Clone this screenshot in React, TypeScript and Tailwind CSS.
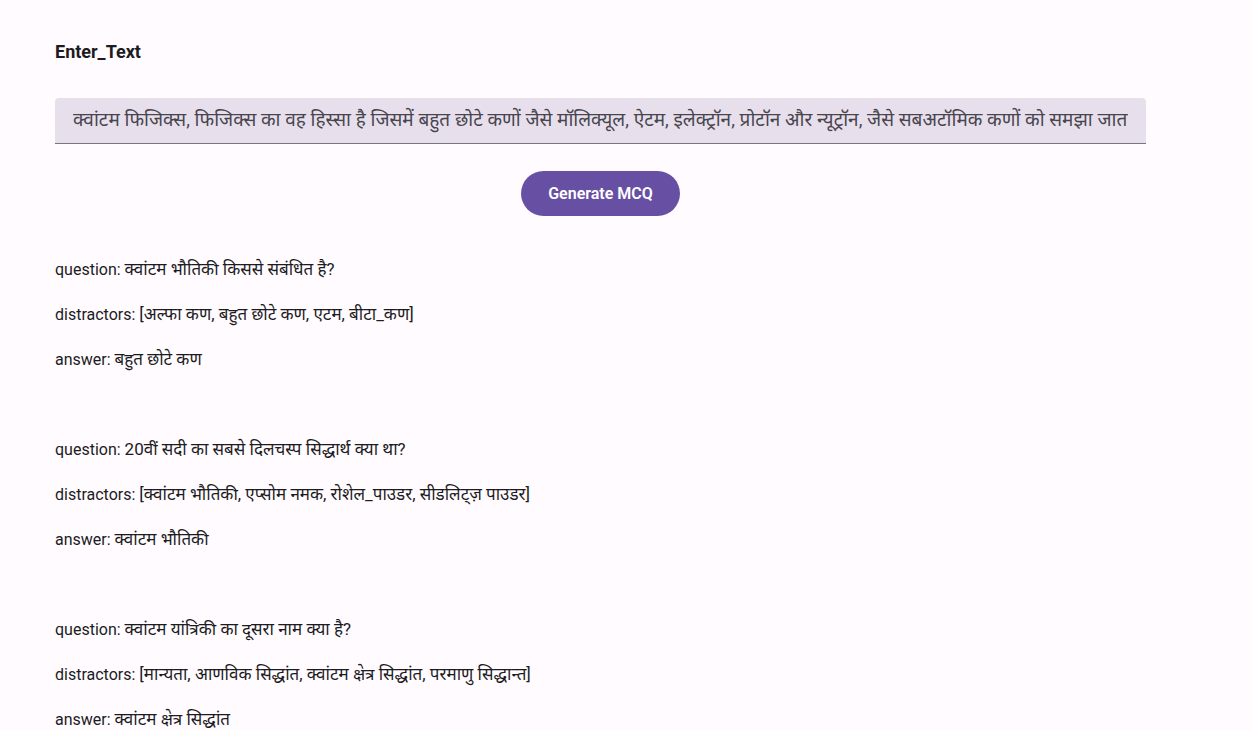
const MCQS = [
  {
    question: "क्वांटम भौतिकी किससे संबंधित है?",
    distractors: "[अल्फा कण, बहुत छोटे कण, एटम, बीटा_कण]",
    answer: "बहुत छोटे कण",
  },
  {
    question: "20वीं सदी का सबसे दिलचस्प सिद्धार्थ क्या था?",
    distractors: "[क्वांटम भौतिकी, एप्सोम नमक, रोशेल_पाउडर, सीडलिट्ज़ पाउडर]",
    answer: "क्वांटम भौतिकी",
  },
  {
    question: "क्वांटम यांत्रिकी का दूसरा नाम क्या है?",
    distractors: "[मान्यता, आणविक सिद्धांत, क्वांटम क्षेत्र सिद्धांत, परमाणु सिद्धान्त]",
    answer: "क्वांटम क्षेत्र सिद्धांत",
  },
];

const INPUT_TEXT =
  "क्वांटम फिजिक्स, फिजिक्स का वह हिस्सा है जिसमें बहुत छोटे कणों जैसे मॉलिक्यूल, ऐटम, इलेक्ट्रॉन, प्रोटॉन और न्यूट्रॉन, जैसे सबअटॉमिक कणों को समझा जाता है।";

function Row({ label, value }: { label: string; value: string }) {
  return (
    <p className="flex h-[45px] items-center whitespace-pre">
      {label}: <span className="text-[17px]">{value}</span>
    </p>
  );
}

export default function App() {
  return (
    <div
      className="h-screen w-full overflow-hidden bg-[#fffbfe] text-[#1c1b1f]"
      style={{ fontFamily: "Roboto, 'Noto Sans', 'Noto Sans Devanagari', sans-serif" }}
    >
      <div className="ml-[55px] w-[1091px] pt-[41px]">
        {/* Heading */}
        <h1 className="text-[18px] font-bold leading-[22px]">Enter_Text</h1>

        {/* Text field */}
        <div className="mt-[35px] flex h-[46px] items-center rounded-t-[4px] border-b border-[#79747e] bg-[#e7e0ec] px-[18px]">
          <div className="overflow-hidden whitespace-nowrap text-[19px] text-[#49454f]">{INPUT_TEXT}</div>
        </div>

        {/* Button */}
        <div className="mt-[27px] flex justify-center">
          <button className="h-[45px] w-[159px] rounded-full bg-[#6750a4] text-[16px] font-semibold text-white">
            Generate MCQ
          </button>
        </div>

        {/* Results */}
        <div className="mt-[31px] flex flex-col text-[16px]">
          {MCQS.map((m, i) => (
            <div key={i} className="flex flex-col">
              <Row label="question" value={m.question} />
              <Row label="distractors" value={m.distractors} />
              <Row label="answer" value={m.answer} />
              <div className="h-[45px]" />
            </div>
          ))}
        </div>
      </div>
    </div>
  );
}
